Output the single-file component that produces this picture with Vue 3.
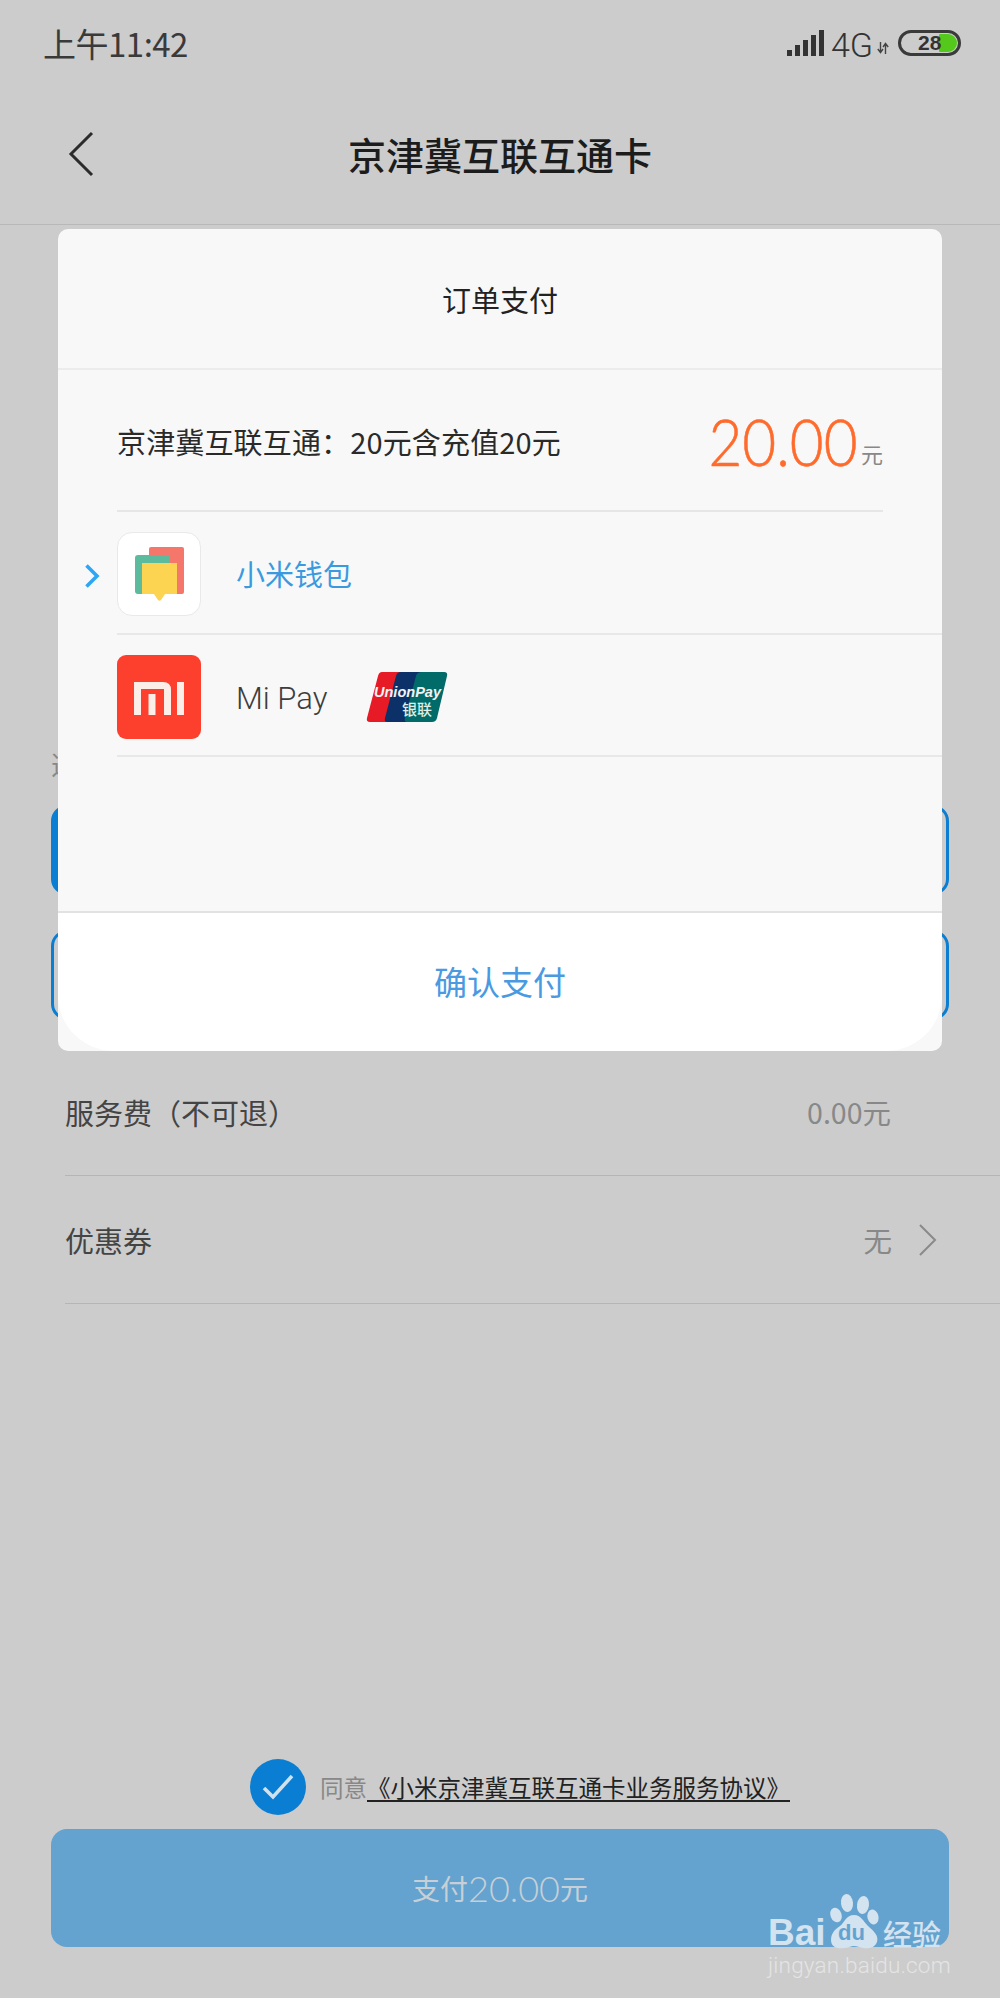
<script setup>
const signalBars = [6, 11, 16, 21, 26];
</script>

<template>
  <div class="page">
    <div class="status">
      <span class="time">上午11:42</span>
      <div class="status-right">
        <div class="signal">
          <i v-for="h in signalBars" :key="h" :style="{ height: h + 'px' }"></i>
        </div>
        <span class="net">4G</span>
        <svg class="arrows" width="12" height="12" viewBox="0 0 12 12">
          <path d="M3.500 0v10M0.800 7l2.700 3.500L6 7M8.500 12V2M6 5l2.500-3.500L11.200 5" fill="none" stroke="#444" stroke-width="1.400" />
        </svg>
        <div class="battery">
          <span class="level"></span>
          <span class="pct">28</span>
        </div>
      </div>
    </div>

    <div class="nav">
      <svg class="back" width="26" height="46" viewBox="0 0 26 46">
        <path d="M24 2L3 23l21 21" fill="none" stroke="#2b2b2b" stroke-width="3" />
      </svg>
      <h1>京津冀互联互通卡</h1>
    </div>

    <div class="content">
      <p class="label">选择充值金额</p>
      <div class="option selected"></div>
      <div class="option"></div>
      <div class="row fee-first">
        <span>服务费（不可退）</span>
        <span class="value">0.00元</span>
      </div>
      <div class="row">
        <span>优惠券</span>
        <span class="value">无
          <svg width="20" height="32" viewBox="0 0 20 32">
            <path d="M2 1l15 15L2 31" fill="none" stroke="#8a8a8a" stroke-width="2" />
          </svg>
        </span>
      </div>
    </div>

    <div class="agree">
      <span class="check">
        <svg width="32" height="26" viewBox="0 0 32 26">
          <path d="M2 14l9 9L30 2" fill="none" stroke="#cfe2f0" stroke-width="3.600" />
        </svg>
      </span>
      <span class="agree-text">同意<u>《小米京津冀互联互通卡业务服务协议》</u></span>
    </div>
    <div class="pay">支付<b>20.00</b>元</div>

    <div class="modal">
      <div class="modal-title">订单支付</div>
      <div class="modal-body">
        <div class="summary">
          <span class="summary-text">京津冀互联互通：20元含充值20元</span>
          <span class="amount"><b>20.00</b><em>元</em></span>
        </div>
        <div class="method active">
          <svg class="pick" width="16" height="26" viewBox="0 0 16 26">
            <path d="M2.500 2.500L13 13 2.500 23.500" fill="none" stroke="#2ea6f6" stroke-width="3.600" />
          </svg>
          <div class="wallet-icon">
            <svg width="49" height="55" viewBox="0 0 49 55">
              <rect x="14" y="0" width="35" height="47" rx="2" fill="#f5766b" />
              <rect x="0" y="8" width="35" height="39" rx="3" fill="#5dbb9d" />
              <path d="M7 16h35v31H30l-4 6q-1.500 1.500-3 0l-4-6H7z" fill="#fdd451" />
            </svg>
          </div>
          <span class="method-name">小米钱包</span>
        </div>
        <div class="method">
          <div class="mi-icon">
            <svg width="50" height="33" viewBox="0 0 50 33">
              <path d="M0 0h29q8 0 8 8v25h-7V7H7v26H0zM14.500 12h7v21h-7zM43 0h7v33h-7z" fill="#fbeee9" />
            </svg>
          </div>
          <span class="mi-name">Mi Pay</span>
          <svg class="unionpay" width="82" height="52" viewBox="0 0 82 52">
            <path d="M16 1h22q4 0 3 4L31 47q-1 4-5 4H4q-4 0-3-4L12 5q1-4 4-4z" fill="#e71b25" />
            <path d="M35 1h24q4 0 3 4L52 47q-1 4-5 4H21q-3 0-2-4L30 5q1-4 5-4z" fill="#0b3168" />
            <path d="M56 1h22q4 0 3 4L71 47q-1 4-5 4H41q-3 0-2-4L50 5q1-4 6-4z" fill="#006b68" />
            <text x="8" y="26" textLength="67" lengthAdjust="spacingAndGlyphs" class="up-en">UnionPay</text>
            <text x="36" y="44" class="up-cn">银联</text>
          </svg>
        </div>
      </div>
      <div class="modal-foot">确认支付</div>
    </div>

    <div class="watermark">
      <svg class="paw" width="52" height="56" viewBox="0 0 52 56">
        <ellipse cx="17" cy="10" rx="6" ry="9" transform="rotate(-6 17 10)" />
        <ellipse cx="33" cy="12" rx="6" ry="9" transform="rotate(8 33 12)" />
        <ellipse cx="6" cy="22" rx="5.500" ry="7.500" transform="rotate(-20 6 22)" />
        <ellipse cx="43" cy="24" rx="5.500" ry="7.500" transform="rotate(-15 43 24)" />
        <path d="M24 22c7 0 9 6 14 11 6 5 11 10 9 16-2 6-9 7-14 6-4-1-6-2-9-2s-6 2-10 2c-7 1-13-1-13-8 0-6 3-10 9-14 5-4 6-11 14-11z" />
        <text x="8" y="47" class="paw-du">du</text>
      </svg>
      <div class="wm-line">
        <span class="wm-bai">Bai</span><span class="wm-cn">经验</span>
      </div>
      <div class="wm-url">jingyan.baidu.com</div>
    </div>
  </div>
</template>

<style>
html, body {
  margin: 0;
  background: #ccc;
}
</style>

<style scoped>
.page {
  position: relative;
  width: 1000px;
  height: 1998px;
  display: flex;
  flex-direction: column;
  overflow: hidden;
  background: #ccc;
  font-family: "Noto Sans CJK SC", "Noto Sans", sans-serif;
  color: #2d2d2d;
}

.status {
  height: 86px;
  display: flex;
  justify-content: space-between;
  align-items: center;
  padding: 0 39px 4px 43px;
}
.time {
  font-size: 33px;
  color: #3a3a3a;
  letter-spacing: -0.5px;
}
.status-right {
  display: flex;
  align-items: center;
}
.signal {
  display: flex;
  align-items: flex-end;
  gap: 3px;
  height: 26px;
  margin-right: 2px;
}
.signal i {
  width: 5px;
  background: #333;
}
.net {
  margin: 3px 0 0 5px;
  font-family: Roboto, sans-serif;
  font-weight: 300;
  font-size: 34px;
  line-height: 32px;
  color: #333;
}
.arrows {
  margin: 10px 9px 0 4px;
}
.battery {
  position: relative;
  width: 63px;
  height: 26px;
  box-sizing: border-box;
  border: 3px solid #3a3a3a;
  border-radius: 13px;
}
.level {
  position: absolute;
  top: 1px;
  right: 1px;
  width: 18px;
  height: 18px;
  border-radius: 1px 9px 9px 1px;
  background: #55c91b;
}
.pct {
  position: absolute;
  left: 17px;
  top: -5px;
  font-family: "Liberation Sans", sans-serif;
  font-weight: 700;
  font-size: 21px;
  line-height: 30px;
  color: #333;
}

.nav {
  position: relative;
  height: 126px;
  border-bottom: 1px solid #b8b8b8;
  display: flex;
  align-items: center;
  justify-content: center;
  padding-bottom: 8px;
}
.nav h1 {
  margin: 0;
  font-size: 38px;
  font-weight: 500;
  color: #1c1c1c;
}
.back {
  position: absolute;
  left: 68px;
  top: 41px;
}

.content {
  display: flex;
  flex-direction: column;
  padding-left: 51px;
}
.label {
  margin: 518px 0 0;
  height: 42px;
  line-height: 42px;
  font-size: 26px;
  color: #888;
}
.option {
  width: 898px;
  height: 90px;
  margin-top: 20px;
  box-sizing: border-box;
  border: 3px solid #0a7ed2;
  border-radius: 16px;
}
.option + .option {
  margin-top: 35px;
}
.option.selected {
  background: linear-gradient(to right, #0a7ed2 12px, transparent 12px);
}
.row {
  margin-left: 14px;
  height: 127px;
  border-bottom: 1px solid #b5b5b5;
  display: flex;
  justify-content: space-between;
  align-items: center;
  padding-right: 109px;
  font-size: 29px;
  color: #444;
}
.fee-first {
  margin-top: 28px;
}
.value {
  display: flex;
  align-items: center;
  gap: 26px;
  font-size: 28.500px;
  color: #888;
}
.row:last-child {
  padding-right: 62px;
}

.agree {
  position: absolute;
  left: 250px;
  top: 1759px;
  display: flex;
  align-items: center;
}
.check {
  width: 56px;
  height: 56px;
  border-radius: 50%;
  background: #0a7ed2;
  display: flex;
  align-items: center;
  justify-content: center;
}
.agree-text {
  margin-left: 14px;
  font-size: 23.500px;
  color: #888;
  white-space: nowrap;
}
.agree-text u {
  color: #222;
  text-underline-offset: 3px;
}
.pay {
  position: absolute;
  left: 51px;
  top: 1829px;
  width: 898px;
  height: 118px;
  border-radius: 16px;
  background: #64a2cf;
  display: flex;
  align-items: center;
  justify-content: center;
  font-size: 28px;
  color: #c6d0d6;
}
.pay b {
  font-weight: 300;
  font-size: 36px;
  font-family: Lato, "Noto Sans", sans-serif;
}

.modal {
  position: absolute;
  left: 58px;
  top: 229px;
  width: 884px;
  height: 822px;
  display: flex;
  flex-direction: column;
  background: #f8f8f8;
  border-radius: 10px;
  overflow: hidden;
}
.modal-title {
  height: 139px;
  line-height: 141px;
  flex: none;
  text-align: center;
  font-size: 29px;
  color: #222;
  border-bottom: 2px solid #ececec;
}
.modal-body {
  flex: 1;
  padding-left: 59px;
}
.summary {
  height: 142px;
  width: 766px;
  box-sizing: border-box;
  padding-top: 2px;
  display: flex;
  justify-content: space-between;
  align-items: center;
  border-bottom: 2px solid #e6e6e6;
  font-size: 29px;
  color: #2a2a2a;
}
.summary-text {
  letter-spacing: 0.15px;
}
.amount {
  display: flex;
  align-items: flex-end;
}
.amount b {
  display: inline-block;
  font-family: Lato, "Noto Sans", sans-serif;
  font-weight: 300;
  font-size: 66px;
  line-height: 66px;
  color: #ff6b2c;
  -webkit-text-stroke: 0.6px #ff6b2c;
  margin-left: -20px;
  transform: scaleX(0.885);
  transform-origin: right center;
}
.amount em {
  font-style: normal;
  font-size: 22px;
  line-height: 30px;
  color: #888;
  margin: 0 0 6px 3px;
}
.method {
  position: relative;
  height: 120px;
  box-sizing: content-box;
  border-bottom: 2px solid #e8e8e8;
  display: flex;
  align-items: center;
}
.method.active {
  height: 121px;
}
.pick {
  position: absolute;
  left: -33px;
  top: 50%;
  margin-top: -10px;
}
.wallet-icon {
  width: 84px;
  height: 84px;
  margin-top: 3px;
  box-sizing: border-box;
  border: 1.500px solid #e9e9e9;
  border-radius: 15px;
  background: #fff;
  display: flex;
  align-items: center;
  justify-content: center;
  padding-top: 1px;
}
.method-name {
  margin-left: 35px;
  font-size: 29px;
  color: #3a9ae0;
}
.mi-icon {
  width: 84px;
  height: 84px;
  margin-top: 4px;
  border-radius: 9px;
  background: #fd402d;
  display: flex;
  align-items: center;
  justify-content: center;
  padding-top: 2px;
  box-sizing: border-box;
}
.mi-name {
  width: 93px;
  margin: 6px 0 0 35px;
  font-family: Roboto, sans-serif;
  font-weight: 300;
  font-size: 31px;
  color: #3d3d3d;
  white-space: nowrap;
}
.unionpay {
  margin: 4px 0 0 37px;
}
.up-en {
  font-family: "Liberation Sans", sans-serif;
  font-weight: 700;
  font-style: italic;
  font-size: 15.500px;
  fill: #f3f3f3;
}
.up-cn {
  font-family: "Noto Sans CJK SC", sans-serif;
  font-weight: 500;
  font-size: 15px;
  fill: #dfeee9;
}
.modal-foot {
  height: 138px;
  flex: none;
  background: #fff;
  border-top: 2px solid #e2e2e2;
  border-radius: 0 0 56px 56px;
  text-align: center;
  line-height: 136px;
  font-size: 33px;
  color: #4a9ae2;
}

.watermark {
  position: absolute;
  left: 768px;
  top: 1892px;
  width: 180px;
}
.paw {
  position: absolute;
  left: 62px;
  top: 1px;
  fill: #d3e3ef;
}
.paw-du {
  font-family: "Liberation Sans", sans-serif;
  font-weight: 700;
  font-size: 22px;
  fill: #64a2cf;
}
.wm-line {
  height: 60px;
  display: flex;
  align-items: flex-end;
  line-height: 38px;
}
.wm-bai {
  width: 115px;
  font-family: "Liberation Sans", sans-serif;
  font-weight: 700;
  font-size: 37px;
  color: #d3e3ef;
}
.wm-cn {
  font-size: 29px;
  font-weight: 500;
  color: #d3e3ef;
}
.wm-url {
  margin-top: -1px;
  font-family: Roboto, sans-serif;
  font-weight: 300;
  font-size: 22.500px;
  letter-spacing: 0.2px;
  line-height: 28px;
  color: #e4e4e4;
  white-space: nowrap;
}
</style>
